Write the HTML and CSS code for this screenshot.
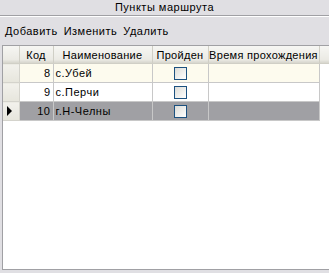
FILE: index.html
```html
<!DOCTYPE html>
<html lang="ru">
<head>
    <meta charset="UTF-8">
    <title>Пункты маршрута</title>
    <link rel="stylesheet" href="styles.css">
</head>
<body>
    <div class="window">
        <div class="title">Пункты маршрута</div>
        <div class="menu">
            <span class="menu-item">Добавить</span>
            <span class="menu-item">Изменить</span>
            <span class="menu-item">Удалить</span>
        </div>
        <div class="grid">
            <table class="grid-table">
                <colgroup>
                    <col class="c-ind"><col class="c-code"><col class="c-name"><col class="c-done"><col class="c-time"><col class="c-fill">
                </colgroup>
                <tr class="head">
                    <th></th><th>Код</th><th>Наименование</th><th>Пройден</th><th>Время прохождения</th><th class="fill"></th>
                </tr>
                <tr class="row-new">
                    <td class="ind"></td><td class="num">8</td><td>с.Убей</td><td class="chk"><span class="box"></span></td><td></td><td class="empty"></td>
                </tr>
                <tr>
                    <td class="ind"></td><td class="num">9</td><td>с.Перчи</td><td class="chk"><span class="box"></span></td><td></td><td class="empty"></td>
                </tr>
                <tr class="row-sel">
                    <td class="ind"><span class="arrow"></span></td><td class="num">10</td><td>г.Н-Челны</td><td class="chk"><span class="box"></span></td><td></td><td class="empty"></td>
                </tr>
            </table>
        </div>
    </div>
</body>
</html>
```

FILE: styles.css
```css
body { margin: 0; background: #e0dfe3; font-family: "Liberation Sans", Arial, sans-serif; font-size: 11px; letter-spacing: 0.5px; color: #000; }
.window { width: 329px; height: 273px; overflow: hidden; display: flex; flex-direction: column; }
.title { height: 16px; line-height: 15px; text-align: center; border-bottom: 1px solid #a0a0a4; box-shadow: 0 1px 0 #fff; box-sizing: border-box; }
.menu { height: 29px; display: flex; align-items: center; padding-left: 5px; gap: 6px; }
.grid { flex: 1; margin: 0 -20px 3px 2px; border: 1px solid #a0a0a4; background: #fff; overflow: hidden; }
.grid-table { border-collapse: collapse; table-layout: fixed; width: 360px; }
.c-ind { width: 16px; }
.c-code { width: 34px; }
.c-name { width: 99px; }
.c-done { width: 56px; }
.c-time { width: 111px; }
.grid-table th, .grid-table td { height: 18px; padding: 0 2px; border: 1px solid #c8c8c8; white-space: nowrap; overflow: hidden; font-weight: normal; }
.grid-table th { padding: 0; letter-spacing: 0.3px; }
.grid-table tr:first-child th { border-top: none; }
.grid-table th:first-child, .grid-table td:first-child { border-left: none; }
.head th { height: 17px; background: linear-gradient(#f6f6f3, #ebeae4 80%, #d6d5cc); border-color: #d0cfc6; text-align: center; }
.head th.fill { border-right: none; }
.grid-table td.ind { background: linear-gradient(#f2f1ec, #e6e5dc); border-color: #d4d3cc; }
.grid-table td.empty { border: none; background: #fff; }
.num { text-align: right; }
.row-new td { background: #fdfbee; }
.row-sel td { background: #a0a0a4; }
.chk { text-align: center; }
.box { display: inline-block; width: 11px; height: 11px; border: 1px solid #1c5180; background: linear-gradient(135deg, #dcdcd7, #fff); vertical-align: middle; }
.arrow { display: block; width: 0; height: 0; border-top: 5px solid transparent; border-bottom: 5px solid transparent; border-left: 5px solid #000; margin-left: 2px; }
```
